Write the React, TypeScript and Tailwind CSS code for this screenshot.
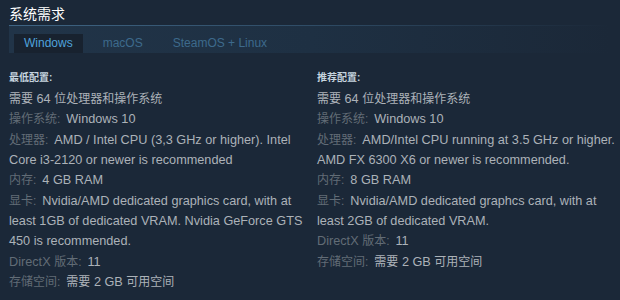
import React from "react";

const font = { fontFamily: '"Liberation Sans", Arial, "Noto Sans CJK SC", sans-serif' };

type Row = { label?: React.ReactNode; value: React.ReactNode };

const C = ({ children }: { children: React.ReactNode }) => (
  <span className="text-[12px]">{children}</span>
);

const storage = (
  <>
    <C>需要</C> 2 GB <C>可用空间</C>
  </>
);
const need64 = (
  <>
    <C>需要</C> 64 <C>位处理器和操作系统</C>
  </>
);

const minRows: Row[] = [
  { value: need64 },
  { label: <C>操作系统:</C>, value: "Windows 10" },
  { label: <C>处理器:</C>, value: "AMD / Intel CPU (3,3 GHz or higher). Intel Core i3-2120 or newer is recommended" },
  { label: <C>内存:</C>, value: "4 GB RAM" },
  { label: <C>显卡:</C>, value: "Nvidia/AMD dedicated graphics card, with at least 1GB of dedicated VRAM. Nvidia GeForce GTS 450 is recommended." },
  { label: <>DirectX <C>版本:</C></>, value: "11" },
  { label: <C>存储空间:</C>, value: storage },
];

const recRows: Row[] = [
  { value: need64 },
  { label: <C>操作系统:</C>, value: "Windows 10" },
  { label: <C>处理器:</C>, value: "AMD/Intel CPU running at 3.5 GHz or higher. AMD FX 6300 X6 or newer is recommended." },
  { label: <C>内存:</C>, value: "8 GB RAM" },
  { label: <C>显卡:</C>, value: "Nvidia/AMD dedicated graphcs card, with at least 2GB of dedicated VRAM." },
  { label: <>DirectX <C>版本:</C></>, value: "11" },
  { label: <C>存储空间:</C>, value: storage },
];

function Col({ title, rows, w }: { title: string; rows: Row[]; w: string }) {
  return (
    <div className={`${w} shrink-0`}>
      <div className="text-[10px] font-bold text-[#c6d4df] leading-[14px] mb-[4px]">{title}</div>
      <ul className="flex flex-col">
        {rows.map((r, i) => (
          <li key={i} className="text-[12.7px] leading-[20.35px] text-[#acb2b8]">
            {r.label && <span className="text-[#626c76] mr-[6px]">{r.label}</span>}
            {r.value}
          </li>
        ))}
      </ul>
    </div>
  );
}

export default function App() {
  return (
    <div className="w-[620px] h-[300px] bg-[#1b2838] overflow-hidden" style={font}>
      <div className="pl-[9px] pt-[5px]">
        <div className="text-[14px] leading-[19px] text-white pb-[1px]">系统需求</div>
        <div className="mr-[9px]">
          <div className="h-px bg-gradient-to-r from-[#3f6584] via-[#2f4c66] to-[#1b2838]" />
          <div className="flex items-end h-[27px] pl-[5px] bg-gradient-to-r from-[#213448] via-[#1e3043] to-[#1b2838]">
            <div className="h-[19px] px-[10px] bg-[#18222f] text-[12px] leading-[19px] text-[#4fa3dc]">Windows</div>
            <div className="h-[19px] px-[10px] ml-[10px] text-[12px] leading-[19px] text-[#3d6a8c]">macOS</div>
            <div className="h-[19px] px-[10px] ml-[10px] text-[12px] leading-[19px] text-[#3d6a8c]">SteamOS + Linux</div>
          </div>
        </div>
        <div className="flex gap-[10px] pt-[18px]">
          <Col title="最低配置:" rows={minRows} w="w-[298px]" />
          <Col title="推荐配置:" rows={recRows} w="w-[303px]" />
        </div>
      </div>
    </div>
  );
}
